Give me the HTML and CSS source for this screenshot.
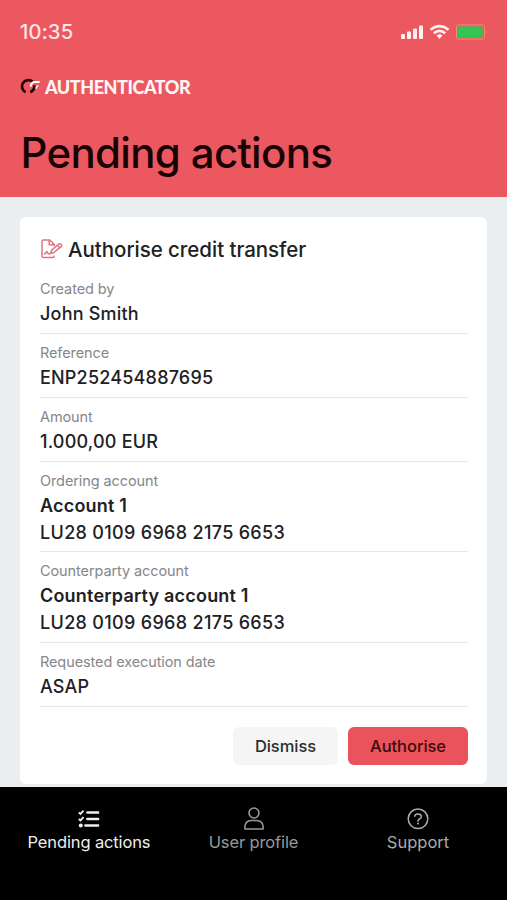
FILE: index.html
```html
<!DOCTYPE html>
<html lang="en">
<head>
<meta charset="utf-8">
<title>Pending actions</title>
<link rel="stylesheet" href="styles.css">
</head>
<body>
<div class="app">
  <header class="header">
    <div class="status">
      <span class="time">10:35</span>
      <svg class="status-icons" width="88" height="18" viewBox="0 0 88 18">
        <g fill="#fff0f0">
          <rect x="1" y="11" width="4" height="5" rx="1"/>
          <rect x="7" y="8.500" width="4" height="7.500" rx="1"/>
          <rect x="13" y="5.500" width="4" height="10.500" rx="1"/>
          <rect x="19" y="2.500" width="4" height="13.500" rx="1"/>
          <path d="M36.500 12.200 39.500 16 42.500 12.200Q39.500 10.200 36.500 12.200Z"/>
        </g>
        <g fill="none" stroke="#fff0f0" stroke-width="2.600">
          <path d="M30.500 6.800Q39.500-.600 48.500 6.800"/>
          <path d="M33.800 10.200Q39.500 5.600 45.200 10.200"/>
        </g>
        <rect x="56.500" y="2" width="28" height="14" rx="2" fill="none" stroke="#f08c70"/>
        <rect x="58" y="3.500" width="24.500" height="11" rx="1" fill="#31c653"/>
        <path d="M86 7v4q1.500-2 0-4Z" fill="#f08c70"/>
      </svg>
    </div>
    <div class="brand">
      <svg width="21" height="18" viewBox="0 0 21 18" fill="none">
        <path d="M6.600 15.200A6.400 6.400 0 1 1 13.800 4.800" stroke="#260508" stroke-width="2.700"/>
        <path d="M15.300 8.300Q15.800 12.800 11.300 15.200" stroke="#260508" stroke-width="2.800"/>
        <path d="M11.600 9.600Q12.300 5 16 5H20.700" stroke="#fff" stroke-width="2"/>
        <path d="M17.200 11.800Q17.200 9.200 19.300 8.800" stroke="#fff" stroke-width="1.500"/>
      </svg>
      <span class="brand-name">AUTHENTICATOR</span>
    </div>
    <h1 class="title">Pending actions</h1>
  </header>
  <main class="main">
    <section class="card">
      <h2 class="card-title">
        <svg width="23" height="22" viewBox="0 0 23 22" fill="none" stroke="#df7484" stroke-width="1.500" stroke-linejoin="round" stroke-linecap="round">
          <path d="M14.200 7.500V6.300L9.700 2H3.200Q2 2 2 3.200V18.300Q2 19.500 3.200 19.500H13Q14.200 19.500 14.200 18.300"/>
          <path d="M9.200 2.500V6.700H13.700"/>
          <path d="M10.700 15.200 11.700 12.100 18.700 6Q20 5.200 21.100 6.300 22.200 7.500 21.200 8.600L13.900 14.500ZM17.300 7.300 19.900 9.800"/>
          <path d="M4.500 15.700H5.300L6.700 13.500 8.200 15.700H10.200"/>
        </svg>
        <span>Authorise credit transfer</span>
      </h2>
      <dl class="fields">
        <div class="field"><dt>Created by</dt><dd>John Smith</dd></div>
        <div class="field"><dt>Reference</dt><dd>ENP252454887695</dd></div>
        <div class="field"><dt>Amount</dt><dd>1.000,00 EUR</dd></div>
        <div class="field"><dt>Ordering account</dt><dd class="strong">Account 1</dd><dd class="iban">LU28 0109 6968 2175 6653</dd></div>
        <div class="field"><dt>Counterparty account</dt><dd class="strong">Counterparty account 1</dd><dd class="iban">LU28 0109 6968 2175 6653</dd></div>
        <div class="field"><dt>Requested execution date</dt><dd>ASAP</dd></div>
      </dl>
      <div class="buttons">
        <button class="btn dismiss">Dismiss</button>
        <button class="btn authorise">Authorise</button>
      </div>
    </section>
  </main>
  <nav class="nav">
    <a class="tab active">
      <svg width="24" height="24" viewBox="0 0 24 24" fill="none" stroke="currentColor">
        <path d="M10.500 5.500H21M10.500 12H21M8.500 18.500H21" stroke-width="2.700" stroke-linecap="round"/>
        <path d="M1.800 5.500 3.500 7 6.500 3.700M1.800 12 3.500 13.500 6.500 10.200" stroke-width="1.900"/>
        <circle cx="3.800" cy="18.500" r="2" fill="currentColor" stroke="none"/>
      </svg>
      <span>Pending actions</span>
    </a>
    <a class="tab">
      <svg width="24" height="24" viewBox="0 0 24 24" fill="none" stroke="currentColor" stroke-width="1.600">
        <circle cx="12" cy="6" r="5"/>
        <path d="M2.800 21.500Q2.500 13.500 9.500 13.500H14.500Q21.500 13.500 21.200 21.500Q21.200 22 20.300 22H3.700Q2.800 22 2.800 21.500Z"/>
      </svg>
      <span>User profile</span>
    </a>
    <a class="tab support">
      <svg width="24" height="24" viewBox="0 0 24 24" fill="none" stroke="currentColor" stroke-width="1.500">
        <circle cx="12" cy="11.800" r="9.800"/>
        <path d="M8.700 9.300Q8.900 7 12 7T15.300 9.500Q15.300 11 13.700 11.700 12 12.400 12 14.200" stroke-linecap="round"/>
        <circle cx="12" cy="16.500" r="1" fill="currentColor" stroke="none"/>
      </svg>
      <span>Support</span>
    </a>
  </nav>
</div>
</body>
</html>
```
FILE: styles.css
```css
* { box-sizing: border-box; }
body { margin: 0; font-family: Inter, "Liberation Sans", sans-serif; color: #202124; }
.app { width: 507px; height: 900px; display: flex; flex-direction: column; overflow: hidden; background: #ebeef1; }
.header { height: 197px; flex: none; background: #eb5860; padding: 20px 19px 0 20px; }
.status { display: flex; justify-content: space-between; align-items: center; height: 24px; }
.time { font-size: 20.5px; line-height: 24px; letter-spacing: .2px; color: #ffe9e9; -webkit-text-stroke: .2px; }
.status-icons { display: block; margin-top: -1px; }
.brand { display: flex; align-items: center; gap: 5px; height: 20px; margin-top: 33px; }
.brand svg { margin: -3px 0 0 -1px; }
.brand-name { font: 900 18px/20px Lato, sans-serif; letter-spacing: -.45px; color: #fff5f4; }
.title { margin: 31px 0 0 .5px; font-size: 42px; line-height: 50px; font-weight: 500; letter-spacing: -.68px; color: #180304; white-space: nowrap; }
.main { flex: 1; padding: 20px 20px 3px; display: flex; }
.card { flex: 1; background: #fff; border-radius: 6px; padding: 19px 19px 0 20px; }
.card-title { display: flex; align-items: center; gap: 5px; margin: 0; font-size: 20.5px; line-height: 26px; font-weight: 500; letter-spacing: -.04px; white-space: nowrap; }
.card-title span { padding-top: 1px; margin-bottom: -1px; }
.fields { margin: 8.3px 0 0; }
.field { border-bottom: 1px solid #e6e7e8; padding: 9px 0 4.9px; }
dt { font-size: 14.5px; line-height: 20px; letter-spacing: -.1px; color: #85878a; }
dd { margin: 0; font-size: 18px; line-height: 26.8px; font-weight: 500; letter-spacing: .2px; }
dt + dd { padding-top: 2.2px; line-height: 26.7px; }
.strong { font-weight: 600; }
.iban { letter-spacing: .32px; }
.buttons { display: flex; justify-content: flex-end; gap: 10px; margin-top: 20px; }
.btn { height: 38px; border: 0; border-radius: 6px; font: 500 16.5px/38px Inter, sans-serif; letter-spacing: -.05px; padding: 0; }
.dismiss { width: 105px; background: #f5f5f5; color: #2c2c2e; }
.authorise { width: 120px; background: #eb535c; color: #3a0b0e; }
.nav { height: 113px; flex: none; background: #000; display: grid; grid-template-columns: 178px 151px 178px; padding-top: 20px; }
.tab { display: flex; flex-direction: column; align-items: center; color: #999; font-size: 16.5px; line-height: 22px; letter-spacing: -.13px; }
.active { color: #eee; }
.support { color: #aaa; letter-spacing: 0; }
```
